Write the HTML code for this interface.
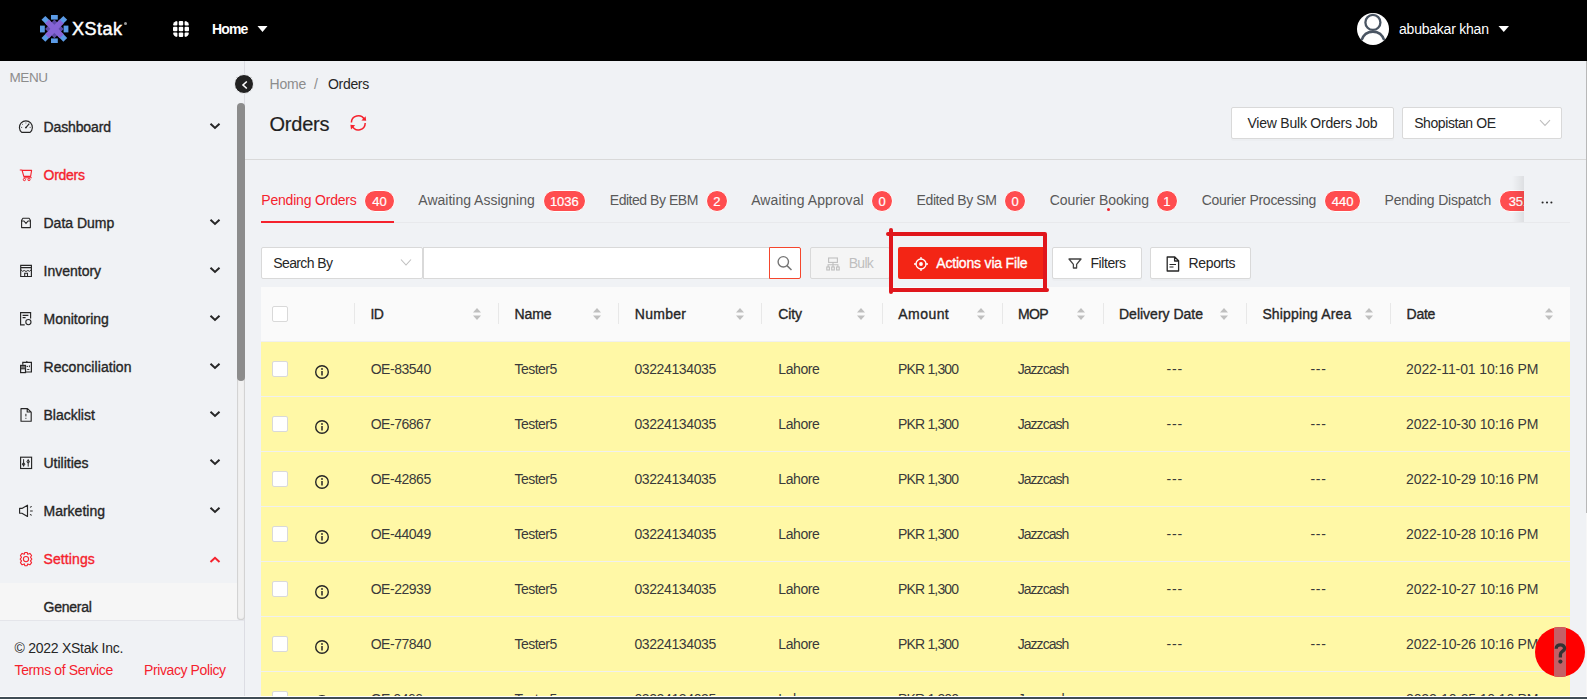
<!DOCTYPE html><html><head><meta charset="utf-8"><style>
html,body{margin:0;padding:0;width:1587px;height:699px;overflow:hidden;background:#f0f2f5;font-family:"Liberation Sans",sans-serif}
.t{position:absolute;white-space:nowrap;line-height:1}
.b{position:absolute;box-sizing:border-box}
.badge{background:#ff4d4f;color:#fff;border:1px solid #fff;border-radius:11px;font-size:13px;line-height:21px;text-align:center;-webkit-text-stroke:0.2px #fff}
</style></head><body>
<div class="b" style="left:0px;top:0px;width:1587px;height:61px;background:#000"></div>
<svg class="b" style="left:39px;top:14px" width="30" height="30" viewBox="0 0 30 30">
<g fill="#5b9be6">
<rect x="12" y="1" width="6.8" height="4.6"/><rect x="12" y="24.4" width="6.8" height="4.6"/>
<rect x="1" y="11.6" width="4.8" height="6.8"/><rect x="24.6" y="11.6" width="4.8" height="6.8"/>
<rect x="3.3" y="3.8" width="7.6" height="5.4" transform="rotate(45 7.1 6.5)"/>
<rect x="19.8" y="3.8" width="7.6" height="5.4" transform="rotate(-45 23.6 6.5)"/>
<rect x="3.3" y="20.4" width="7.6" height="5.4" transform="rotate(-45 7.1 23.1)"/>
<rect x="19.8" y="20.4" width="7.6" height="5.4" transform="rotate(45 23.6 23.1)"/>
</g>
<polygon points="15.4,5.6 24.7,14.9 15.4,24.2 6.1,14.9" fill="#5d4aa6"/>
<g fill="#8663d6">
<rect x="5" y="12" width="20.8" height="5.8" transform="rotate(45 15.4 14.9)"/>
<rect x="5" y="12" width="20.8" height="5.8" transform="rotate(-45 15.4 14.9)"/>
</g>
</svg>
<span class="t" style="left:72.00px;top:19.76px;font-size:18px;color:#fff;letter-spacing:0.513px;-webkit-text-stroke:0.45px #fff;">XStak</span>
<div class="b" style="left:124px;top:22px;width:3px;height:3px;border-radius:50%;background:#999"></div>
<svg class="b" style="left:173px;top:21px" width="16" height="16" viewBox="0 0 16 16">
<defs><clipPath id="cg"><rect x="0" y="0" width="16" height="16" rx="4.5"/></clipPath></defs>
<g clip-path="url(#cg)" fill="#fff"><rect x="0" y="0" width="4.4" height="4.4" rx="1"/><rect x="5.8" y="0" width="4.4" height="4.4" rx="1"/><rect x="11.6" y="0" width="4.4" height="4.4" rx="1"/><rect x="0" y="5.8" width="4.4" height="4.4" rx="1"/><rect x="5.8" y="5.8" width="4.4" height="4.4" rx="1"/><rect x="11.6" y="5.8" width="4.4" height="4.4" rx="1"/><rect x="0" y="11.6" width="4.4" height="4.4" rx="1"/><rect x="5.8" y="11.6" width="4.4" height="4.4" rx="1"/><rect x="11.6" y="11.6" width="4.4" height="4.4" rx="1"/></g></svg>
<span class="t" style="left:212.00px;top:22.15px;font-size:14px;color:#fff;font-weight:bold;letter-spacing:-0.867px;">Home</span>
<svg class="b" style="left:257px;top:25px" width="11" height="8"><polygon points="0.5,1 10.5,1 5.5,7" fill="#fff"/></svg>
<svg class="b" style="left:1357px;top:13px" width="32" height="32" viewBox="0 0 32 32">
<circle cx="16" cy="16" r="16" fill="#fff"/>
<circle cx="15.9" cy="9.4" r="7.5" fill="none" stroke="#4a5563" stroke-width="2.3"/>
<path d="M4.6 27.2 C6.4 21.2 10.4 18.7 15.9 18.7 C21.4 18.7 25.4 21.2 27.2 27.2" fill="none" stroke="#4a5563" stroke-width="2.4"/>
</svg>
<span class="t" style="left:1399.00px;top:21.65px;font-size:14px;color:#fff;letter-spacing:-0.221px;">abubakar khan</span>
<svg class="b" style="left:1498px;top:25px" width="12" height="8"><polygon points="0.5,1 11,1 5.75,7" fill="#fff"/></svg>
<div class="b" style="left:244px;top:61px;width:1px;height:636px;background:#dcdde3"></div>
<span class="t" style="left:9.50px;top:70.57px;font-size:13.5px;color:#8c8c8c;letter-spacing:-0.383px;">MENU</span>
<span class="t" style="left:43.50px;top:120.15px;font-size:14px;color:#262626;-webkit-text-stroke:0.35px #262626;letter-spacing:-0.125px;">Dashboard</span>
<svg class="b" style="left:209px;top:122px" width="12" height="8"><path d="M1.5 1.8 L6 6 L10.5 1.8" fill="none" stroke="#262626" stroke-width="2"/></svg>
<span class="t" style="left:43.50px;top:168.15px;font-size:14px;color:#f5222d;-webkit-text-stroke:0.35px #f5222d;letter-spacing:-0.260px;">Orders</span>
<span class="t" style="left:43.50px;top:216.15px;font-size:14px;color:#262626;-webkit-text-stroke:0.35px #262626;">Data Dump</span>
<svg class="b" style="left:209px;top:218px" width="12" height="8"><path d="M1.5 1.8 L6 6 L10.5 1.8" fill="none" stroke="#262626" stroke-width="2"/></svg>
<span class="t" style="left:43.50px;top:264.15px;font-size:14px;color:#262626;-webkit-text-stroke:0.35px #262626;">Inventory</span>
<svg class="b" style="left:209px;top:266px" width="12" height="8"><path d="M1.5 1.8 L6 6 L10.5 1.8" fill="none" stroke="#262626" stroke-width="2"/></svg>
<span class="t" style="left:43.50px;top:312.15px;font-size:14px;color:#262626;-webkit-text-stroke:0.35px #262626;">Monitoring</span>
<svg class="b" style="left:209px;top:314px" width="12" height="8"><path d="M1.5 1.8 L6 6 L10.5 1.8" fill="none" stroke="#262626" stroke-width="2"/></svg>
<span class="t" style="left:43.50px;top:360.15px;font-size:14px;color:#262626;-webkit-text-stroke:0.35px #262626;letter-spacing:0.065px;">Reconciliation</span>
<svg class="b" style="left:209px;top:362px" width="12" height="8"><path d="M1.5 1.8 L6 6 L10.5 1.8" fill="none" stroke="#262626" stroke-width="2"/></svg>
<span class="t" style="left:43.50px;top:408.15px;font-size:14px;color:#262626;-webkit-text-stroke:0.35px #262626;">Blacklist</span>
<svg class="b" style="left:209px;top:410px" width="12" height="8"><path d="M1.5 1.8 L6 6 L10.5 1.8" fill="none" stroke="#262626" stroke-width="2"/></svg>
<span class="t" style="left:43.50px;top:456.15px;font-size:14px;color:#262626;-webkit-text-stroke:0.35px #262626;">Utilities</span>
<svg class="b" style="left:209px;top:458px" width="12" height="8"><path d="M1.5 1.8 L6 6 L10.5 1.8" fill="none" stroke="#262626" stroke-width="2"/></svg>
<span class="t" style="left:43.50px;top:504.15px;font-size:14px;color:#262626;-webkit-text-stroke:0.35px #262626;">Marketing</span>
<svg class="b" style="left:209px;top:506px" width="12" height="8"><path d="M1.5 1.8 L6 6 L10.5 1.8" fill="none" stroke="#262626" stroke-width="2"/></svg>
<span class="t" style="left:43.50px;top:552.15px;font-size:14px;color:#f5222d;-webkit-text-stroke:0.35px #f5222d;letter-spacing:0.100px;">Settings</span>
<svg class="b" style="left:209px;top:556px" width="12" height="8"><path d="M1.5 6 L6 1.8 L10.5 6" fill="none" stroke="#f5222d" stroke-width="2"/></svg>
<svg class="b" style="left:14px;top:115px" width="26" height="26" viewBox="0 0 26 26"><path d="M7.7 17.4 A6.5 6.5 0 1 1 16.1 17.4 Z" fill="none" stroke="#262626" stroke-width="1.15" stroke-linejoin="round"/><path d="M11.9 12.6 L15.3 8.6" stroke="#262626" stroke-width="1.2"/><circle cx="11.9" cy="12.6" r="0.9" fill="#262626"/><path d="M8.3 9.2 L9 9.8 M11.9 7.6 V8.4 M7.2 12.4 H8.1 M15.7 12.4 H16.6" stroke="#262626" stroke-width="0.9"/></svg>
<svg class="b" style="left:14px;top:163px" width="26" height="26" viewBox="0 0 26 26"><path d="M5.8 7 H8 L9.8 13.4 H16.6 L17.6 7.4 H8.3 M9.6 14.8 H17.8" fill="none" stroke="#f5222d" stroke-width="1.1" stroke-linejoin="round"/><circle cx="10.4" cy="16.6" r="1.1" fill="none" stroke="#f5222d" stroke-width="1"/><circle cx="15" cy="16.6" r="1.1" fill="none" stroke="#f5222d" stroke-width="1"/></svg>
<svg class="b" style="left:14px;top:211px" width="26" height="26" viewBox="0 0 26 26"><path d="M7.6 16.6 V9.2 L8.9 7.3 H15.1 L16.4 9.2 V16.6 Z" fill="none" stroke="#262626" stroke-width="1.1" stroke-linejoin="round"/><path d="M7.6 10 H9.9 L12 12.4 L14.1 10 H16.4" fill="none" stroke="#262626" stroke-width="1.05"/></svg>
<svg class="b" style="left:14px;top:259px" width="26" height="26" viewBox="0 0 26 26"><path d="M6.7 6.4 H17.4 V17.5 H6.7 Z M6.7 8.6 H17.4" fill="none" stroke="#262626" stroke-width="1.15"/><path d="M6.7 10.5 Q8.5 13.5 10.3 11.5 Q12 13.5 13.8 11.5 Q15.6 13.5 17.4 10.5" fill="none" stroke="#262626" stroke-width="1"/><path d="M10.7 17.5 V14.3 H13.5 V17.5" fill="none" stroke="#262626" stroke-width="1.1"/></svg>
<svg class="b" style="left:14px;top:307px" width="26" height="26" viewBox="0 0 26 26"><path d="M10.7 17.9 H6.6 V5.6 H16.6 V11.6" fill="none" stroke="#262626" stroke-width="1.15"/><path d="M8.6 8.4 H14.4 M8.6 10.6 H11.6" stroke="#262626" stroke-width="1.1"/><circle cx="14.4" cy="15.1" r="2.6" fill="none" stroke="#262626" stroke-width="1.1"/></svg>
<svg class="b" style="left:14px;top:355px" width="26" height="26" viewBox="0 0 26 26"><path d="M8.8 9.8 V7.4 H17.4 V17 H11.6" fill="none" stroke="#262626" stroke-width="1.2"/><path d="M11.5 7.4 L12.8 5.8 L14.1 7.4 Z" fill="#262626"/><rect x="6.6" y="10.4" width="4.9" height="7.2" fill="none" stroke="#262626" stroke-width="1.2"/><rect x="7" y="11" width="4.2" height="2.6" fill="#777"/><path d="M6.6 13.8 H11.5" stroke="#262626" stroke-width="1"/><circle cx="13.3" cy="11.4" r="0.7" fill="#262626"/><path d="M15.4 10.4 V12.2" stroke="#262626" stroke-width="1"/><path d="M12.6 15 Q14.2 12.8 15.8 15 Z" fill="#262626"/></svg>
<svg class="b" style="left:14px;top:403px" width="26" height="26" viewBox="0 0 26 26"><path d="M7 5.6 H13.5 L17.2 9.2 V18.2 H7 Z M13.2 5.6 V9 H17" fill="none" stroke="#262626" stroke-width="1.15" stroke-linejoin="round"/><path d="M11.9 10.8 V13.4 M11.9 14.8 V15.8" stroke="#262626" stroke-width="1"/></svg>
<svg class="b" style="left:14px;top:451px" width="26" height="26" viewBox="0 0 26 26"><rect x="6.6" y="6.2" width="11" height="11.3" fill="none" stroke="#262626" stroke-width="1.15"/><path d="M9.6 8.2 V15.6 M14.2 8.2 V15.6" stroke="#262626" stroke-width="1"/><circle cx="9.6" cy="13.2" r="1.2" fill="none" stroke="#262626" stroke-width="1"/><circle cx="14.2" cy="10.6" r="1.2" fill="none" stroke="#262626" stroke-width="1"/></svg>
<svg class="b" style="left:14px;top:499px" width="26" height="26" viewBox="0 0 26 26"><path d="M5.6 9.4 H7.9 L13.5 6.2 V17.5 L7.9 14.2 H5.6 Z" fill="none" stroke="#262626" stroke-width="1.15" stroke-linejoin="round"/><path d="M16 8.4 L17.7 7.4 M16.1 12 H18.7 M16 15.4 L17.7 16.4" stroke="#262626" stroke-width="1.1"/></svg>
<svg class="b" style="left:14px;top:547px" width="26" height="26" viewBox="0 0 26 26"><path d="M10.8 5.5 H13.2 L13.7 7.3 L15.9 6.4 L17.6 8.5 L16.5 10.3 L17.8 12.1 L16.5 13.9 L17.6 15.7 L15.9 17.8 L13.7 16.9 L13.2 18.7 H10.8 L10.3 16.9 L8.1 17.8 L6.4 15.7 L7.5 13.9 L6.2 12.1 L7.5 10.3 L6.4 8.5 L8.1 6.4 L10.3 7.3 Z" fill="none" stroke="#f5222d" stroke-width="1.1" stroke-linejoin="round"/><circle cx="12" cy="12.1" r="2.6" fill="none" stroke="#f5222d" stroke-width="1.1"/></svg>
<div class="b" style="left:0px;top:583px;width:237px;height:37px;background:#f6f6f6"></div>
<span class="t" style="left:43.50px;top:600.15px;font-size:14px;color:#262626;-webkit-text-stroke:0.35px #262626;letter-spacing:-0.233px;">General</span>
<div class="b" style="left:0px;top:620px;width:244px;height:1px;background:#e4e5ea"></div>
<div class="b" style="left:237px;top:370px;width:8px;height:250px;background:#f1f1f1;border-radius:0 0 4px 4px;box-shadow:inset 1px 0 1px #d0d0d0, inset -1px 0 1px #d0d0d0, inset 0 -1px 1px #d0d0d0"></div>
<div class="b" style="left:237px;top:103px;width:8px;height:278px;background:#8c8c8c;border-radius:4px"></div>
<span class="t" style="left:14.50px;top:641.15px;font-size:14px;color:#262626;letter-spacing:-0.266px;">© 2022 XStak Inc.</span>
<span class="t" style="left:14.50px;top:663.15px;font-size:14px;color:#f5222d;letter-spacing:-0.370px;">Terms of Service</span>
<span class="t" style="left:144.00px;top:663.15px;font-size:14px;color:#f5222d;letter-spacing:-0.396px;">Privacy Policy</span>
<div class="b" style="left:0px;top:696px;width:1587px;height:1px;background:#fff"></div>
<div class="b" style="left:0px;top:697px;width:1587px;height:2px;background:#414d55"></div>
<div class="b" style="left:234px;top:74px;width:20px;height:20px;border-radius:50%;background:#222;border:1px solid #eef0f3"></div>
<svg class="b" style="left:240px;top:80px" width="10" height="10"><path d="M6.8 1.5 L3 5 L6.8 8.5" fill="none" stroke="#fff" stroke-width="1.6"/></svg>
<span class="t" style="left:269.50px;top:77.15px;font-size:14px;color:#8c8c8c;letter-spacing:-0.183px;">Home</span>
<span class="t" style="left:314.00px;top:77.15px;font-size:14px;color:#8c8c8c;">/</span>
<span class="t" style="left:328.00px;top:77.15px;font-size:14px;color:#262626;letter-spacing:-0.320px;">Orders</span>
<span class="t" style="left:269.50px;top:113.67px;font-size:20px;color:#1f1f1f;letter-spacing:-0.220px;-webkit-text-stroke:0.2px #1f1f1f;">Orders</span>
<div class="b" style="left:245px;top:159px;width:1341px;height:1px;background:#d9d9d9"></div>
<div class="b" style="left:1586px;top:61px;width:1px;height:452px;background:#b8b8b8"></div>
<div class="b" style="left:1586px;top:513px;width:1px;height:184px;background:#f7f7f7"></div>
<div class="b" style="left:1231px;top:107px;width:163px;height:32px;background:#fff;border:1px solid #d9d9d9;border-radius:2px;box-shadow:0 2px 0 rgba(0,0,0,.015)"></div>
<span class="t" style="left:1247.50px;top:116.15px;font-size:14px;color:#262626;letter-spacing:-0.229px;">View Bulk Orders Job</span>
<div class="b" style="left:1402px;top:107px;width:160px;height:32px;background:#fff;border:1px solid #d9d9d9;border-radius:2px"></div>
<span class="t" style="left:1414.20px;top:116.15px;font-size:14px;color:#262626;letter-spacing:-0.418px;">Shopistan OE</span>
<svg class="b" style="left:1539px;top:119px" width="12" height="8"><path d="M1 1.2 L6 6.5 L11 1.2" fill="none" stroke="#bfbfbf" stroke-width="1.1"/></svg>
<svg class="b" style="left:344px;top:108px" width="28" height="28" viewBox="0 0 28 28">
<path d="M7.4 14.6 A6.9 6.9 0 0 1 20.4 11.4" fill="none" stroke="#f5222d" stroke-width="1.5"/>
<path d="M21.2 15 A6.9 6.9 0 0 1 8.2 18.2" fill="none" stroke="#f5222d" stroke-width="1.5"/>
<polygon points="17.4,12.4 22.2,12.8 21.6,8.2" fill="#f5222d"/>
<polygon points="11.2,17.2 6.4,16.8 7,21.4" fill="#f5222d"/>
</svg>
<div class="b" style="left:261px;top:222px;width:1309px;height:1px;background:#e8e9ec"></div>
<span class="t" style="left:261.30px;top:193.15px;font-size:14px;color:#f5222d;letter-spacing:-0.196px;">Pending Orders</span>
<div class="b badge" style="left:363.8px;top:190px;width:31.3px;height:22px">40</div>
<span class="t" style="left:418.30px;top:193.15px;font-size:14px;color:#595959;">Awaiting Assigning</span>
<div class="b badge" style="left:542.7px;top:190px;width:43.3px;height:22px">1036</div>
<span class="t" style="left:609.80px;top:193.15px;font-size:14px;color:#595959;letter-spacing:-0.471px;">Edited By EBM</span>
<div class="b badge" style="left:705.8px;top:190px;width:22.2px;height:22px">2</div>
<span class="t" style="left:751.20px;top:193.15px;font-size:14px;color:#595959;letter-spacing:0.091px;">Awaiting Approval</span>
<div class="b badge" style="left:871.2px;top:190px;width:21.8px;height:22px">0</div>
<span class="t" style="left:916.60px;top:193.15px;font-size:14px;color:#595959;letter-spacing:-0.418px;">Edited By SM</span>
<div class="b badge" style="left:1004.0px;top:190px;width:22.0px;height:22px">0</div>
<span class="t" style="left:1049.70px;top:193.15px;font-size:14px;color:#595959;letter-spacing:-0.071px;">Courier Booking</span>
<div class="b badge" style="left:1155.7px;top:190px;width:22.3px;height:22px">1</div>
<span class="t" style="left:1201.70px;top:193.15px;font-size:14px;color:#595959;letter-spacing:-0.262px;">Courier Processing</span>
<div class="b badge" style="left:1324.2px;top:190px;width:36.9px;height:22px">440</div>
<span class="t" style="left:1384.50px;top:193.15px;font-size:14px;color:#595959;letter-spacing:-0.203px;">Pending Dispatch</span>
<div class="b badge" style="left:1498.5px;top:190px;width:42.0px;height:22px">351</div>
<div class="b" style="left:261px;top:221px;width:133px;height:2px;background:#f5222d"></div>
<div class="b" style="left:1524px;top:170px;width:46px;height:52px;background:#f0f2f5"></div>
<div class="b" style="left:1512px;top:176px;width:12px;height:46px;background:linear-gradient(to right, rgba(0,0,0,0), rgba(0,0,0,.08))"></div>
<svg class="b" style="left:1540px;top:200px" width="14" height="5"><circle cx="2.6" cy="2.5" r="1.05" fill="#262626"/><circle cx="7" cy="2.5" r="1.05" fill="#262626"/><circle cx="11.4" cy="2.5" r="1.05" fill="#262626"/></svg>
<div class="b" style="left:1107px;top:208px;width:3px;height:3px;background:#f5222d;border-radius:50%"></div>
<div class="b" style="left:261px;top:247px;width:162px;height:32px;background:#fff;border:1px solid #d9d9d9;border-radius:2px"></div>
<span class="t" style="left:273.30px;top:256.15px;font-size:14px;color:#262626;letter-spacing:-0.625px;">Search By</span>
<svg class="b" style="left:400px;top:258px" width="12" height="9"><path d="M1 1.5 L6 7 L11 1.5" fill="none" stroke="#bfbfbf" stroke-width="1.1"/></svg>
<div class="b" style="left:423px;top:247px;width:347px;height:32px;background:#fff;border:1px solid #d9d9d9;border-right:none"></div>
<div class="b" style="left:769px;top:247px;width:32px;height:32px;background:#fff;border:1px solid #f5462d;border-radius:0 2px 2px 0"></div>
<svg class="b" style="left:776px;top:255px" width="17" height="16" viewBox="0 0 17 16">
<circle cx="7.3" cy="6.8" r="5.2" fill="none" stroke="#757575" stroke-width="1.4"/>
<path d="M11 10.6 L15.5 15" stroke="#757575" stroke-width="1.5"/></svg>
<div class="b" style="left:810px;top:247px;width:80px;height:32px;background:#f5f5f5;border:1px solid #d9d9d9;border-radius:2px"></div>
<svg class="b" style="left:826px;top:257px" width="14" height="14" viewBox="0 0 14 14">
<g fill="none" stroke="#bfbfbf" stroke-width="1.1"><rect x="2.6" y="1" width="8.8" height="4.4"/><path d="M7 5.4 V7.8 M2.1 10 V7.8 H11.9 V10 M7 7.8 V10"/>
<rect x="0.8" y="10" width="2.6" height="3"/><rect x="5.7" y="10" width="2.6" height="3"/><rect x="10.6" y="10" width="2.6" height="3"/></g></svg>
<span class="t" style="left:848.70px;top:256.15px;font-size:14px;color:#bfbfbf;letter-spacing:-0.700px;">Bulk</span>
<div class="b" style="left:898px;top:247px;width:147px;height:32px;background:#f32515;border-radius:2px"></div>
<svg class="b" style="left:913px;top:256px" width="16" height="16" viewBox="0 0 16 16">
<g fill="none" stroke="#fff" stroke-width="1.3"><circle cx="8" cy="8" r="5"/><path d="M8 1 V3.5 M8 12.5 V15 M1 8 H3.5 M12.5 8 H15"/></g>
<circle cx="8" cy="8" r="1.9" fill="#fff"/></svg>
<span class="t" style="left:936.30px;top:256.15px;font-size:14px;color:#fff;-webkit-text-stroke:0.35px #fff;letter-spacing:-0.190px;">Actions via File</span>
<div class="b" style="left:1052px;top:247px;width:90px;height:32px;background:#fff;border:1px solid #d9d9d9;border-radius:2px;box-shadow:0 2px 0 rgba(0,0,0,.015)"></div>
<svg class="b" style="left:1068px;top:257px" width="14" height="14" viewBox="0 0 14 14">
<path d="M1 2 H13 L8.6 7.4 V11 H5.4 V7.4 Z" fill="none" stroke="#434343" stroke-width="1.3" stroke-linejoin="round"/></svg>
<span class="t" style="left:1090.40px;top:256.15px;font-size:14px;color:#262626;letter-spacing:-0.417px;">Filters</span>
<div class="b" style="left:1150px;top:247px;width:101px;height:32px;background:#fff;border:1px solid #d9d9d9;border-radius:2px;box-shadow:0 2px 0 rgba(0,0,0,.015)"></div>
<svg class="b" style="left:1166px;top:256px" width="14" height="16" viewBox="0 0 14 16">
<path d="M1.2 1 H8.8 L12.6 4.8 V15 H1.2 Z M8.6 1 V5 H12.6" fill="none" stroke="#262626" stroke-width="1.3" stroke-linejoin="round"/>
<path d="M3.5 8.5 H10 M3.5 11 H7.5" stroke="#262626" stroke-width="1.1"/></svg>
<span class="t" style="left:1188.60px;top:256.15px;font-size:14px;color:#262626;letter-spacing:-0.367px;">Reports</span>
<div class="b" style="left:261px;top:287px;width:1309px;height:55px;background:#fafafa;border-bottom:1px solid #f0f0f0"></div>
<div class="b" style="left:272px;top:306px;width:16px;height:16px;background:#fff;border:1px solid #d9d9d9;border-radius:2px"></div>
<div class="b" style="left:354px;top:303px;width:1px;height:21px;background:#e8e8e8"></div>
<div class="b" style="left:498px;top:303px;width:1px;height:21px;background:#e8e8e8"></div>
<div class="b" style="left:618px;top:303px;width:1px;height:21px;background:#e8e8e8"></div>
<div class="b" style="left:761px;top:303px;width:1px;height:21px;background:#e8e8e8"></div>
<div class="b" style="left:882px;top:303px;width:1px;height:21px;background:#e8e8e8"></div>
<div class="b" style="left:1002px;top:303px;width:1px;height:21px;background:#e8e8e8"></div>
<div class="b" style="left:1103px;top:303px;width:1px;height:21px;background:#e8e8e8"></div>
<div class="b" style="left:1246px;top:303px;width:1px;height:21px;background:#e8e8e8"></div>
<div class="b" style="left:1390px;top:303px;width:1px;height:21px;background:#e8e8e8"></div>
<span class="t" style="left:370.40px;top:307.15px;font-size:14px;color:#262626;-webkit-text-stroke:0.35px #262626;letter-spacing:-0.550px;">ID</span>
<svg class="b" style="left:471.6px;top:307px" width="10" height="14" viewBox="0 0 10 14"><polygon points="5,1 9,5.5 1,5.5" fill="#bfbfbf"/><polygon points="5,13 9,8.5 1,8.5" fill="#bfbfbf"/></svg>
<span class="t" style="left:514.60px;top:307.15px;font-size:14px;color:#262626;-webkit-text-stroke:0.35px #262626;letter-spacing:-0.100px;">Name</span>
<svg class="b" style="left:591.5px;top:307px" width="10" height="14" viewBox="0 0 10 14"><polygon points="5,1 9,5.5 1,5.5" fill="#bfbfbf"/><polygon points="5,13 9,8.5 1,8.5" fill="#bfbfbf"/></svg>
<span class="t" style="left:634.80px;top:307.15px;font-size:14px;color:#262626;-webkit-text-stroke:0.35px #262626;letter-spacing:0.270px;">Number</span>
<svg class="b" style="left:735.3px;top:307px" width="10" height="14" viewBox="0 0 10 14"><polygon points="5,1 9,5.5 1,5.5" fill="#bfbfbf"/><polygon points="5,13 9,8.5 1,8.5" fill="#bfbfbf"/></svg>
<span class="t" style="left:778.30px;top:307.15px;font-size:14px;color:#262626;-webkit-text-stroke:0.35px #262626;letter-spacing:-0.150px;">City</span>
<svg class="b" style="left:855.6px;top:307px" width="10" height="14" viewBox="0 0 10 14"><polygon points="5,1 9,5.5 1,5.5" fill="#bfbfbf"/><polygon points="5,13 9,8.5 1,8.5" fill="#bfbfbf"/></svg>
<span class="t" style="left:898.30px;top:307.15px;font-size:14px;color:#262626;-webkit-text-stroke:0.35px #262626;letter-spacing:0.440px;">Amount</span>
<svg class="b" style="left:975.8px;top:307px" width="10" height="14" viewBox="0 0 10 14"><polygon points="5,1 9,5.5 1,5.5" fill="#bfbfbf"/><polygon points="5,13 9,8.5 1,8.5" fill="#bfbfbf"/></svg>
<span class="t" style="left:1017.90px;top:307.15px;font-size:14px;color:#262626;-webkit-text-stroke:0.35px #262626;letter-spacing:-0.625px;">MOP</span>
<svg class="b" style="left:1076.4px;top:307px" width="10" height="14" viewBox="0 0 10 14"><polygon points="5,1 9,5.5 1,5.5" fill="#bfbfbf"/><polygon points="5,13 9,8.5 1,8.5" fill="#bfbfbf"/></svg>
<span class="t" style="left:1119.00px;top:307.15px;font-size:14px;color:#262626;-webkit-text-stroke:0.35px #262626;">Delivery Date</span>
<svg class="b" style="left:1219.3px;top:307px" width="10" height="14" viewBox="0 0 10 14"><polygon points="5,1 9,5.5 1,5.5" fill="#bfbfbf"/><polygon points="5,13 9,8.5 1,8.5" fill="#bfbfbf"/></svg>
<span class="t" style="left:1262.40px;top:307.15px;font-size:14px;color:#262626;-webkit-text-stroke:0.35px #262626;letter-spacing:0.146px;">Shipping Area</span>
<svg class="b" style="left:1363.5px;top:307px" width="10" height="14" viewBox="0 0 10 14"><polygon points="5,1 9,5.5 1,5.5" fill="#bfbfbf"/><polygon points="5,13 9,8.5 1,8.5" fill="#bfbfbf"/></svg>
<span class="t" style="left:1406.60px;top:307.15px;font-size:14px;color:#262626;-webkit-text-stroke:0.35px #262626;letter-spacing:-0.267px;">Date</span>
<svg class="b" style="left:1543.7px;top:307px" width="10" height="14" viewBox="0 0 10 14"><polygon points="5,1 9,5.5 1,5.5" fill="#bfbfbf"/><polygon points="5,13 9,8.5 1,8.5" fill="#bfbfbf"/></svg>
<div class="b" style="left:261px;top:342px;width:1309px;height:55px;background:#fff8a6;border-bottom:1px solid #f0f0f0"></div>
<div class="b" style="left:272px;top:361px;width:16px;height:16px;background:#fff;border:1px solid #d9d9d9;border-radius:2px"></div>
<svg class="b" style="left:314px;top:364px" width="16" height="16" viewBox="0 0 16 16"><circle cx="8" cy="8" r="6.3" fill="none" stroke="#262626" stroke-width="1.4"/><circle cx="8" cy="5" r="0.9" fill="#262626"/><path d="M8 7 V11.5" stroke="#262626" stroke-width="1.5"/></svg>
<span class="t" style="left:370.70px;top:362.15px;font-size:14px;color:#3a3a3a;letter-spacing:-0.471px;">OE-83540</span>
<span class="t" style="left:514.60px;top:362.15px;font-size:14px;color:#3a3a3a;letter-spacing:-0.550px;">Tester5</span>
<span class="t" style="left:634.40px;top:362.15px;font-size:14px;color:#3a3a3a;letter-spacing:-0.375px;">03224134035</span>
<span class="t" style="left:778.30px;top:362.15px;font-size:14px;color:#3a3a3a;letter-spacing:-0.400px;">Lahore</span>
<span class="t" style="left:898.00px;top:362.15px;font-size:14px;color:#3a3a3a;letter-spacing:-0.825px;">PKR 1,300</span>
<span class="t" style="left:1017.70px;top:362.15px;font-size:14px;color:#3a3a3a;letter-spacing:-0.950px;">Jazzcash</span>
<span class="t" style="left:1166.40px;top:362.15px;font-size:14px;color:#3a3a3a;letter-spacing:0.900px;">---</span>
<span class="t" style="left:1310.40px;top:362.15px;font-size:14px;color:#3a3a3a;letter-spacing:0.800px;">---</span>
<span class="t" style="left:1406.10px;top:362.15px;font-size:14px;color:#3a3a3a;letter-spacing:-0.117px;">2022-11-01 10:16 PM</span>
<div class="b" style="left:261px;top:397px;width:1309px;height:55px;background:#fff8a6;border-bottom:1px solid #f0f0f0"></div>
<div class="b" style="left:272px;top:416px;width:16px;height:16px;background:#fff;border:1px solid #d9d9d9;border-radius:2px"></div>
<svg class="b" style="left:314px;top:419px" width="16" height="16" viewBox="0 0 16 16"><circle cx="8" cy="8" r="6.3" fill="none" stroke="#262626" stroke-width="1.4"/><circle cx="8" cy="5" r="0.9" fill="#262626"/><path d="M8 7 V11.5" stroke="#262626" stroke-width="1.5"/></svg>
<span class="t" style="left:370.70px;top:417.15px;font-size:14px;color:#3a3a3a;letter-spacing:-0.471px;">OE-76867</span>
<span class="t" style="left:514.60px;top:417.15px;font-size:14px;color:#3a3a3a;letter-spacing:-0.550px;">Tester5</span>
<span class="t" style="left:634.40px;top:417.15px;font-size:14px;color:#3a3a3a;letter-spacing:-0.375px;">03224134035</span>
<span class="t" style="left:778.30px;top:417.15px;font-size:14px;color:#3a3a3a;letter-spacing:-0.400px;">Lahore</span>
<span class="t" style="left:898.00px;top:417.15px;font-size:14px;color:#3a3a3a;letter-spacing:-0.825px;">PKR 1,300</span>
<span class="t" style="left:1017.70px;top:417.15px;font-size:14px;color:#3a3a3a;letter-spacing:-0.950px;">Jazzcash</span>
<span class="t" style="left:1166.40px;top:417.15px;font-size:14px;color:#3a3a3a;letter-spacing:0.900px;">---</span>
<span class="t" style="left:1310.40px;top:417.15px;font-size:14px;color:#3a3a3a;letter-spacing:0.800px;">---</span>
<span class="t" style="left:1406.10px;top:417.15px;font-size:14px;color:#3a3a3a;letter-spacing:-0.175px;">2022-10-30 10:16 PM</span>
<div class="b" style="left:261px;top:452px;width:1309px;height:55px;background:#fff8a6;border-bottom:1px solid #f0f0f0"></div>
<div class="b" style="left:272px;top:471px;width:16px;height:16px;background:#fff;border:1px solid #d9d9d9;border-radius:2px"></div>
<svg class="b" style="left:314px;top:474px" width="16" height="16" viewBox="0 0 16 16"><circle cx="8" cy="8" r="6.3" fill="none" stroke="#262626" stroke-width="1.4"/><circle cx="8" cy="5" r="0.9" fill="#262626"/><path d="M8 7 V11.5" stroke="#262626" stroke-width="1.5"/></svg>
<span class="t" style="left:370.70px;top:472.15px;font-size:14px;color:#3a3a3a;letter-spacing:-0.471px;">OE-42865</span>
<span class="t" style="left:514.60px;top:472.15px;font-size:14px;color:#3a3a3a;letter-spacing:-0.550px;">Tester5</span>
<span class="t" style="left:634.40px;top:472.15px;font-size:14px;color:#3a3a3a;letter-spacing:-0.375px;">03224134035</span>
<span class="t" style="left:778.30px;top:472.15px;font-size:14px;color:#3a3a3a;letter-spacing:-0.400px;">Lahore</span>
<span class="t" style="left:898.00px;top:472.15px;font-size:14px;color:#3a3a3a;letter-spacing:-0.825px;">PKR 1,300</span>
<span class="t" style="left:1017.70px;top:472.15px;font-size:14px;color:#3a3a3a;letter-spacing:-0.950px;">Jazzcash</span>
<span class="t" style="left:1166.40px;top:472.15px;font-size:14px;color:#3a3a3a;letter-spacing:0.900px;">---</span>
<span class="t" style="left:1310.40px;top:472.15px;font-size:14px;color:#3a3a3a;letter-spacing:0.800px;">---</span>
<span class="t" style="left:1406.10px;top:472.15px;font-size:14px;color:#3a3a3a;letter-spacing:-0.175px;">2022-10-29 10:16 PM</span>
<div class="b" style="left:261px;top:507px;width:1309px;height:55px;background:#fff8a6;border-bottom:1px solid #f0f0f0"></div>
<div class="b" style="left:272px;top:526px;width:16px;height:16px;background:#fff;border:1px solid #d9d9d9;border-radius:2px"></div>
<svg class="b" style="left:314px;top:529px" width="16" height="16" viewBox="0 0 16 16"><circle cx="8" cy="8" r="6.3" fill="none" stroke="#262626" stroke-width="1.4"/><circle cx="8" cy="5" r="0.9" fill="#262626"/><path d="M8 7 V11.5" stroke="#262626" stroke-width="1.5"/></svg>
<span class="t" style="left:370.70px;top:527.15px;font-size:14px;color:#3a3a3a;letter-spacing:-0.471px;">OE-44049</span>
<span class="t" style="left:514.60px;top:527.15px;font-size:14px;color:#3a3a3a;letter-spacing:-0.550px;">Tester5</span>
<span class="t" style="left:634.40px;top:527.15px;font-size:14px;color:#3a3a3a;letter-spacing:-0.375px;">03224134035</span>
<span class="t" style="left:778.30px;top:527.15px;font-size:14px;color:#3a3a3a;letter-spacing:-0.400px;">Lahore</span>
<span class="t" style="left:898.00px;top:527.15px;font-size:14px;color:#3a3a3a;letter-spacing:-0.825px;">PKR 1,300</span>
<span class="t" style="left:1017.70px;top:527.15px;font-size:14px;color:#3a3a3a;letter-spacing:-0.950px;">Jazzcash</span>
<span class="t" style="left:1166.40px;top:527.15px;font-size:14px;color:#3a3a3a;letter-spacing:0.900px;">---</span>
<span class="t" style="left:1310.40px;top:527.15px;font-size:14px;color:#3a3a3a;letter-spacing:0.800px;">---</span>
<span class="t" style="left:1406.10px;top:527.15px;font-size:14px;color:#3a3a3a;letter-spacing:-0.175px;">2022-10-28 10:16 PM</span>
<div class="b" style="left:261px;top:562px;width:1309px;height:55px;background:#fff8a6;border-bottom:1px solid #f0f0f0"></div>
<div class="b" style="left:272px;top:581px;width:16px;height:16px;background:#fff;border:1px solid #d9d9d9;border-radius:2px"></div>
<svg class="b" style="left:314px;top:584px" width="16" height="16" viewBox="0 0 16 16"><circle cx="8" cy="8" r="6.3" fill="none" stroke="#262626" stroke-width="1.4"/><circle cx="8" cy="5" r="0.9" fill="#262626"/><path d="M8 7 V11.5" stroke="#262626" stroke-width="1.5"/></svg>
<span class="t" style="left:370.70px;top:582.15px;font-size:14px;color:#3a3a3a;letter-spacing:-0.471px;">OE-22939</span>
<span class="t" style="left:514.60px;top:582.15px;font-size:14px;color:#3a3a3a;letter-spacing:-0.550px;">Tester5</span>
<span class="t" style="left:634.40px;top:582.15px;font-size:14px;color:#3a3a3a;letter-spacing:-0.375px;">03224134035</span>
<span class="t" style="left:778.30px;top:582.15px;font-size:14px;color:#3a3a3a;letter-spacing:-0.400px;">Lahore</span>
<span class="t" style="left:898.00px;top:582.15px;font-size:14px;color:#3a3a3a;letter-spacing:-0.825px;">PKR 1,300</span>
<span class="t" style="left:1017.70px;top:582.15px;font-size:14px;color:#3a3a3a;letter-spacing:-0.950px;">Jazzcash</span>
<span class="t" style="left:1166.40px;top:582.15px;font-size:14px;color:#3a3a3a;letter-spacing:0.900px;">---</span>
<span class="t" style="left:1310.40px;top:582.15px;font-size:14px;color:#3a3a3a;letter-spacing:0.800px;">---</span>
<span class="t" style="left:1406.10px;top:582.15px;font-size:14px;color:#3a3a3a;letter-spacing:-0.175px;">2022-10-27 10:16 PM</span>
<div class="b" style="left:261px;top:617px;width:1309px;height:55px;background:#fff8a6;border-bottom:1px solid #f0f0f0"></div>
<div class="b" style="left:272px;top:636px;width:16px;height:16px;background:#fff;border:1px solid #d9d9d9;border-radius:2px"></div>
<svg class="b" style="left:314px;top:639px" width="16" height="16" viewBox="0 0 16 16"><circle cx="8" cy="8" r="6.3" fill="none" stroke="#262626" stroke-width="1.4"/><circle cx="8" cy="5" r="0.9" fill="#262626"/><path d="M8 7 V11.5" stroke="#262626" stroke-width="1.5"/></svg>
<span class="t" style="left:370.70px;top:637.15px;font-size:14px;color:#3a3a3a;letter-spacing:-0.471px;">OE-77840</span>
<span class="t" style="left:514.60px;top:637.15px;font-size:14px;color:#3a3a3a;letter-spacing:-0.550px;">Tester5</span>
<span class="t" style="left:634.40px;top:637.15px;font-size:14px;color:#3a3a3a;letter-spacing:-0.375px;">03224134035</span>
<span class="t" style="left:778.30px;top:637.15px;font-size:14px;color:#3a3a3a;letter-spacing:-0.400px;">Lahore</span>
<span class="t" style="left:898.00px;top:637.15px;font-size:14px;color:#3a3a3a;letter-spacing:-0.825px;">PKR 1,300</span>
<span class="t" style="left:1017.70px;top:637.15px;font-size:14px;color:#3a3a3a;letter-spacing:-0.950px;">Jazzcash</span>
<span class="t" style="left:1166.40px;top:637.15px;font-size:14px;color:#3a3a3a;letter-spacing:0.900px;">---</span>
<span class="t" style="left:1310.40px;top:637.15px;font-size:14px;color:#3a3a3a;letter-spacing:0.800px;">---</span>
<span class="t" style="left:1406.10px;top:637.15px;font-size:14px;color:#3a3a3a;letter-spacing:-0.175px;">2022-10-26 10:16 PM</span>
<div class="b" style="left:261px;top:672px;width:1309px;height:55px;background:#fff8a6;border-bottom:1px solid #f0f0f0"></div>
<div class="b" style="left:272px;top:691px;width:16px;height:16px;background:#fff;border:1px solid #d9d9d9;border-radius:2px"></div>
<svg class="b" style="left:314px;top:694px" width="16" height="16" viewBox="0 0 16 16"><circle cx="8" cy="8" r="6.3" fill="none" stroke="#262626" stroke-width="1.4"/><circle cx="8" cy="5" r="0.9" fill="#262626"/><path d="M8 7 V11.5" stroke="#262626" stroke-width="1.5"/></svg>
<span class="t" style="left:370.70px;top:692.15px;font-size:14px;color:#3a3a3a;letter-spacing:-0.675px;">OE-9466</span>
<span class="t" style="left:514.60px;top:692.15px;font-size:14px;color:#3a3a3a;letter-spacing:-0.550px;">Tester5</span>
<span class="t" style="left:634.40px;top:692.15px;font-size:14px;color:#3a3a3a;letter-spacing:-0.375px;">03224134035</span>
<span class="t" style="left:778.30px;top:692.15px;font-size:14px;color:#3a3a3a;letter-spacing:-0.400px;">Lahore</span>
<span class="t" style="left:898.00px;top:692.15px;font-size:14px;color:#3a3a3a;letter-spacing:-0.825px;">PKR 1,300</span>
<span class="t" style="left:1017.70px;top:692.15px;font-size:14px;color:#3a3a3a;letter-spacing:-0.950px;">Jazzcash</span>
<span class="t" style="left:1166.40px;top:692.15px;font-size:14px;color:#3a3a3a;letter-spacing:0.900px;">---</span>
<span class="t" style="left:1310.40px;top:692.15px;font-size:14px;color:#3a3a3a;letter-spacing:0.800px;">---</span>
<span class="t" style="left:1406.10px;top:692.15px;font-size:14px;color:#3a3a3a;letter-spacing:-0.175px;">2022-10-25 10:16 PM</span>
<div class="b" style="left:1570px;top:287px;width:16px;height:410px;background:#f0f2f5"></div>
<div class="b" style="left:1535px;top:627px;width:50px;height:50px;border-radius:50%;background:#ff0000;overflow:hidden">
<div class="b" style="left:18.6px;top:0;width:12px;height:50px;background:#c46066"></div></div>
<svg class="b" style="left:1550px;top:640px" width="20" height="26" viewBox="0 0 20 26"><path d="M6.2 8.8 C6.2 6.2 8 4.8 10.4 4.8 C12.8 4.8 14.6 6.2 14.6 8.4 C14.6 11 10.4 11.4 10.4 14.4 V17.4" fill="none" stroke="#333" stroke-width="3.3"/><circle cx="10.4" cy="21.6" r="2.1" fill="#333"/></svg>
<div class="b" style="left:0px;top:696px;width:1587px;height:1px;background:#fff"></div>
<div class="b" style="left:0px;top:697px;width:1587px;height:2px;background:#414d55"></div>
<svg class="b" style="left:884px;top:226px" width="170" height="72" viewBox="0 0 170 72">
<g fill="none" stroke="#e0161c" stroke-width="4" stroke-linecap="round" stroke-linejoin="round">
<path d="M7 4 V66"/><path d="M4 8 H161 V64 L163 64"/><path d="M7 64 H162"/></g></svg>
</body></html>
